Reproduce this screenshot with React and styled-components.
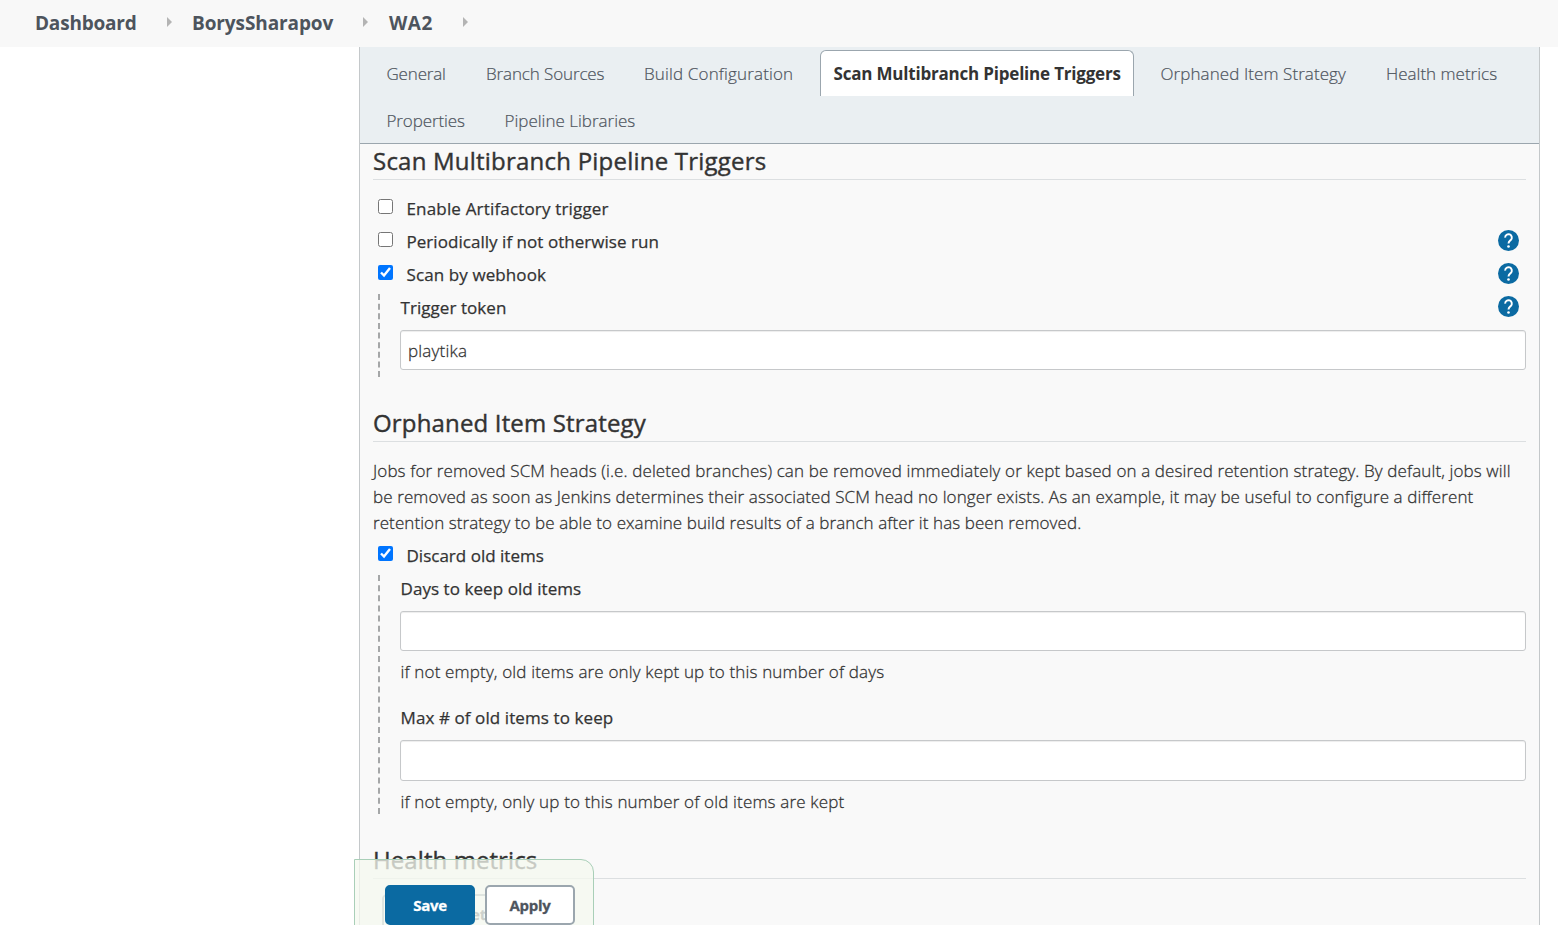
import React from "react";
import styled, { createGlobalStyle } from "styled-components";

const GlobalStyle = createGlobalStyle`
  * { box-sizing: border-box; }
  body {
    margin: 0;
    background: #fff;
    color: #333;
    font-family: "Open Sans", "Noto Sans", sans-serif;
    font-size: 17px;
    font-weight: 300;
    -webkit-text-stroke: 0.28px;
  }
`;

const Page = styled.div`
  position: relative;
  display: flex;
  flex-direction: column;
  height: 925px;
  overflow: hidden;
`;

const Breadcrumbs = styled.nav`
  display: flex;
  align-items: center;
  flex: none;
  height: 47px;
  padding: 0 0 2px 35px;
  background: #f8f8f8;
`;

const Crumb = styled.a`
  width: ${(p) => p.$width}px;
  font-size: 19px;
  font-weight: 700;
  letter-spacing: ${(p) => p.$spacing}px;
  white-space: nowrap;
  color: #4d545d;
  -webkit-text-stroke: 0;
`;

const CrumbArrow = styled.svg`
  display: block;
  width: 5px;
  height: 10px;
  margin: 0 ${(p) => p.$after}px 1px 30px;
  fill: #b4b4b4;
`;

const Panel = styled.main`
  flex: none;
  width: 1181px;
  height: 900px;
  margin-left: 359px;
  border: solid #c4c8ca;
  border-width: 0 1px;
  background: #f9f9f9;
`;

const TabBar = styled.div`
  display: flex;
  flex-wrap: wrap;
  align-content: flex-start;
  row-gap: 1px;
  height: 97px;
  padding: 3px 6px 0 7px;
  background: #eaeff2;
  border-bottom: 1px solid #9ba6ae;
`;

const Tab = styled.a`
  height: 46px;
  width: ${(p) => p.$width}px;
  margin: 0 7px 0 6px;
  padding: 0 0 0 12.5px;
  border: 1px solid ${(p) => (p.$active ? "#9ba6ae" : "transparent")};
  border-bottom: 0;
  border-radius: 6px 6px 0 0;
  background: ${(p) => (p.$active ? "#fff" : "transparent")};
  color: ${(p) => (p.$active ? "#333" : "#4d545d")};
  font-weight: ${(p) => (p.$active ? 700 : 300)};
  letter-spacing: ${(p) => p.$spacing}px;
  line-height: 46px;
  white-space: nowrap;
  -webkit-text-stroke: ${(p) => (p.$active ? 0 : 0.2)}px;
`;

const Section = styled.section`
  margin: 0 13px ${(p) => p.$after || 0}px;
`;

const Heading = styled.h2`
  height: 36px;
  margin: 0 0 ${(p) => p.$gap}px;
  border-bottom: 1px solid #dcdfe1;
  font-size: 24px;
  font-weight: 400;
  line-height: 34px;
  letter-spacing: ${(p) => p.$spacing}px;
  -webkit-text-stroke: 0.4px;
`;

const OptionRow = styled.div`
  display: flex;
  align-items: center;
  height: 33px;
  padding-right: 7px;
`;

const Checkbox = styled.input`
  flex: none;
  width: 15px;
  height: 15px;
  margin: 0 13px 4px 5px;
`;

const Label = styled.label`
  flex: 1;
  padding-left: 0.5px;
  font-weight: 400;
  letter-spacing: ${(p) => p.$spacing || 0.06}px;
  -webkit-text-stroke: 0.25px;
`;

const HelpIcon = styled.svg`
  flex: none;
  width: 21px;
  height: 21px;
  margin-bottom: 2px;
`;

const Nested = styled.div`
  position: relative;
  padding-left: 27px;
`;

const DashedGuide = styled.div`
  position: absolute;
  left: 5px;
  top: 3px;
  height: ${(p) => p.$height}px;
  border-left: 2px dashed #a5a7a8;
`;

const TextInput = styled.input`
  display: block;
  width: 100%;
  height: ${(p) => p.$height || 40}px;
  margin: 6px 0 0;
  padding: 0 7px;
  border: 1px solid #c6c8ca;
  border-radius: 3px;
  box-shadow: inset 0 1px 1px rgba(0, 0, 0, 0.075);
  background: #fff;
  color: #333;
  font: inherit;
  letter-spacing: 0.2px;
  -webkit-text-stroke: 0.28px;
`;

const Paragraph = styled.p`
  margin: 0 0 3px;
  line-height: 26px;
  white-space: nowrap;
`;

const Line = styled.span`
  display: block;
  letter-spacing: ${(p) => p.$spacing}px;
`;

const Hint = styled.div`
  height: 30px;
  margin: 6px 0 ${(p) => p.$after}px;
  padding-left: 0.5px;
  line-height: 30px;
  letter-spacing: 0.16px;
`;

const MetricsButton = styled.button`
  display: block;
  height: 40px;
  margin-left: 9px;
  padding: 0 18px;
  border: 2px solid #9ba6ae;
  border-radius: 5px;
  background: #fff;
  color: #4d545d;
  font: 700 15px "Open Sans", sans-serif;
`;

const ActionBar = styled.div`
  position: absolute;
  left: 354px;
  top: 859px;
  display: flex;
  gap: 10px;
  width: 240px;
  height: 90px;
  padding: 25px 0 0 30px;
  border: 1px solid #a9cfb8;
  border-radius: 0 13px 0 0;
  background: rgba(245, 249, 239, 0.76);
`;

const ActionButton = styled.button`
  width: 90px;
  height: 40px;
  padding: 0;
  border: 2px solid ${(p) => (p.$primary ? "#0b6aa2" : "#9ba6ae")};
  border-radius: 5px;
  background: ${(p) => (p.$primary ? "#0b6aa2" : "#fff")};
  color: ${(p) => (p.$primary ? "#fff" : "#4d545d")};
  font: 700 15px "Open Sans", sans-serif;
  letter-spacing: -0.25px;
`;

const tabs = [
  { name: "General", width: 86.5, spacing: -0.17 },
  { name: "Branch Sources", width: 145, spacing: -0.12 },
  { name: "Build Configuration", width: 176.5, spacing: 0.15 },
  { name: "Scan Multibranch Pipeline Triggers", width: 314, spacing: -0.2, active: true },
  { name: "Orphaned Item Strategy", width: 212.5, spacing: 0.08 },
  { name: "Health metrics", width: 138, spacing: 0 },
  { name: "Properties", width: 105, spacing: -0.12 },
  { name: "Pipeline Libraries", width: 157, spacing: 0 },
];

const Arrow = ({ after = 20 }) => (
  <CrumbArrow viewBox="0 0 5 10" $after={after}>
    <path d="M0 0L5 5L0 10Z" />
  </CrumbArrow>
);

const Help = () => (
  <HelpIcon viewBox="0 0 24 24">
    <circle cx="12" cy="12" r="12" fill="#0b6aa2" />
    <path
      d="M8.2 8.7a3.8 3.8 0 1 1 6.4 2.7c-1.3 1.3-2.6 2-2.6 4.1"
      fill="none"
      stroke="#fff"
      strokeWidth="2.2"
    />
    <circle cx="12" cy="18.8" r="1.5" fill="#fff" />
  </HelpIcon>
);

const Option = ({ text, checked, help, spacing }) => (
  <OptionRow>
    <Checkbox type="checkbox" defaultChecked={checked} />
    <Label $spacing={spacing}>{text}</Label>
    {help && <Help />}
  </OptionRow>
);

export default function App() {
  return (
    <Page>
      <GlobalStyle />
      <Breadcrumbs>
        <Crumb $width={102} $spacing={-0.2}>Dashboard</Crumb>
        <Arrow />
        <Crumb $width={141} $spacing={-0.1}>BorysSharapov</Crumb>
        <Arrow after={21} />
        <Crumb $width={44} $spacing={0.5}>WA2</Crumb>
        <Arrow />
      </Breadcrumbs>
      <Panel>
        <TabBar>
          {tabs.map((t) => (
            <Tab key={t.name} $width={t.width} $spacing={t.spacing} $active={t.active}>
              {t.name}
            </Tab>
          ))}
        </TabBar>

        <Section $after={36}>
          <Heading $gap={12} $spacing={0.22}>Scan Multibranch Pipeline Triggers</Heading>
          <Option text="Enable Artifactory trigger" spacing={0.17} />
          <Option text="Periodically if not otherwise run" spacing={0.04} help />
          <Option text="Scan by webhook" checked help spacing={0.1} />
          <Nested>
            <DashedGuide $height={83} />
            <OptionRow>
              <Label>Trigger token</Label>
              <Help />
            </OptionRow>
            <TextInput defaultValue="playtika" />
          </Nested>
        </Section>

        <Section $after={26}>
          <Heading $gap={16} $spacing={0.16}>Orphaned Item Strategy</Heading>
          <Paragraph>
            <Line $spacing={0.115}>
              Jobs for removed SCM heads (i.e. deleted branches) can be removed immediately or kept based on a desired
              retention strategy. By default, jobs will
            </Line>
            <Line $spacing={0.1}>
              be removed as soon as Jenkins determines their associated SCM head no longer exists. As an example, it may
              be useful to configure a different
            </Line>
            <Line $spacing={0.08}>
              retention strategy to be able to examine build results of a branch after it has been removed.
            </Line>
          </Paragraph>
          <Option text="Discard old items" checked spacing={0.01} />
          <Nested>
            <DashedGuide $height={239} />
            <OptionRow>
              <Label>Days to keep old items</Label>
            </OptionRow>
            <TextInput />
            <Hint $after={14}>if not empty, old items are only kept up to this number of days</Hint>
            <OptionRow>
              <Label $spacing={0.09}>Max # of old items to keep</Label>
            </OptionRow>
            <TextInput $height={41} />
            <Hint $after={0}>if not empty, only up to this number of old items are kept</Hint>
          </Nested>
        </Section>

        <Section>
          <Heading $gap={15} $spacing={0.08}>Health metrics</Heading>
          <MetricsButton>Health metrics...</MetricsButton>
        </Section>
      </Panel>
      <ActionBar>
        <ActionButton $primary>Save</ActionButton>
        <ActionButton>Apply</ActionButton>
      </ActionBar>
    </Page>
  );
}
